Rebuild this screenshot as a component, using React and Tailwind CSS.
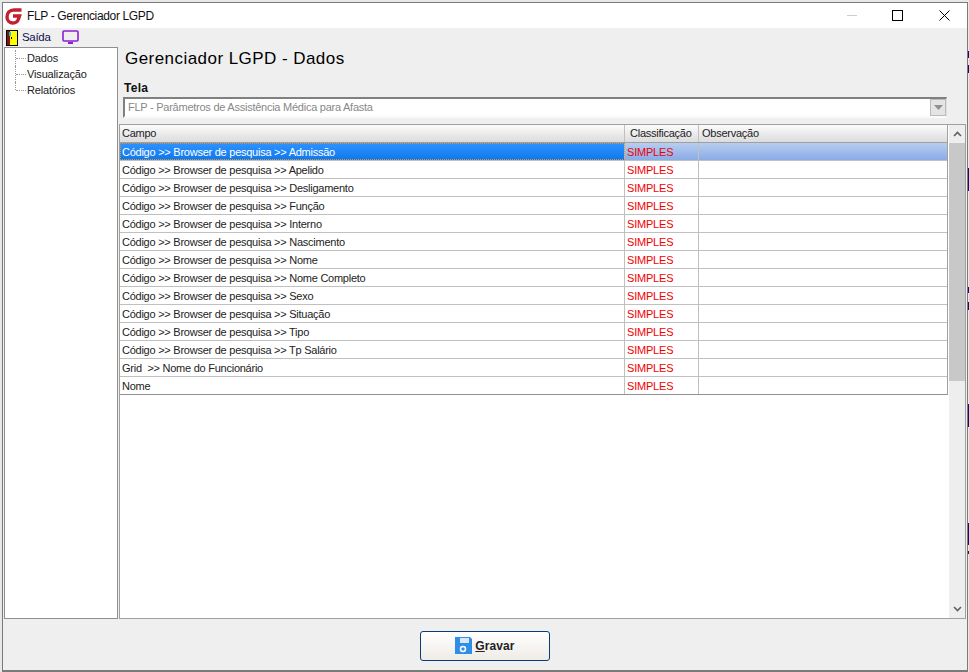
import { useState } from 'react'

const font = 'font-["Liberation_Sans",Arial,sans-serif]'

const campos = [
  'Código >> Browser de pesquisa >> Admissão',
  'Código >> Browser de pesquisa >> Apelido',
  'Código >> Browser de pesquisa >> Desligamento',
  'Código >> Browser de pesquisa >> Função',
  'Código >> Browser de pesquisa >> Interno',
  'Código >> Browser de pesquisa >> Nascimento',
  'Código >> Browser de pesquisa >> Nome',
  'Código >> Browser de pesquisa >> Nome Completo',
  'Código >> Browser de pesquisa >> Sexo',
  'Código >> Browser de pesquisa >> Situação',
  'Código >> Browser de pesquisa >> Tipo',
  'Código >> Browser de pesquisa >> Tp Salário',
  'Grid  >> Nome do Funcionário',
  'Nome',
]

// pieces of the window behind, visible past the right frame
const backdrop = [
  'h-[51px]', 'h-[7px] bg-[#10106a]', 'h-[7px]', 'h-[8px] bg-[#10106a]', 'h-[95px]',
  'h-[23px] bg-[#10106a]', 'h-[96px]', 'h-[6px] bg-[#10106a]', 'h-[9px]', 'h-[8px] bg-[#10106a]',
  'h-[94px]', 'h-[23px] bg-[#10106a]', 'h-[96px]', 'h-[22px] bg-[#10106a]', 'h-[6px]', 'h-[3px] bg-[#222]',
]

function TitleBar() {
  return (
    <div className="h-[25px] bg-white flex items-center shrink-0">
      <svg width="18" height="18" viewBox="0 0 18 18" className="ml-[2px]">
        <path d="M16.5 3 H9 C4.5 3 2 6 2 10 C2 14 5 16 8 16 C11 16 12.5 15 13.5 12 L14.5 9 H8" fill="none" stroke="#c42030" strokeWidth="3.4" />
      </svg>
      <span className="ml-[4px] text-[12px] tracking-[-0.35px] text-[#111]">FLP - Gerenciador LGPD</span>
      <div className="ml-auto flex items-center">
        <div className="w-[10px] h-px bg-[#ccc] mr-[35px]" />
        <div className="w-[9px] h-[9px] border border-black mr-[36px] box-content" />
        <svg width="11" height="11" viewBox="0 0 11 11" className="mr-[17px]">
          <path d="M0.5 0.5 L10.5 10.5 M10.5 0.5 L0.5 10.5" stroke="#000" strokeWidth="1" />
        </svg>
      </div>
    </div>
  )
}

function MenuBar() {
  return (
    <div className="h-[19px] flex items-center shrink-0 pl-[3px]">
      <svg width="12" height="16" viewBox="0 0 12 16">
        <rect width="12" height="16" fill="#000" />
        <rect x="1" y="1" width="10" height="14" fill="#ffff00" />
        <rect x="1" y="1" width="3" height="14" fill="#8b1010" />
        <rect x="3" y="2" width="2" height="4" fill="#18c8d8" />
        <rect x="5" y="7" width="1" height="2" fill="#000" />
      </svg>
      <span className="ml-[4px] w-[28px] text-[11.5px] tracking-[-0.3px] text-[#10104a]">Saída</span>
      <svg width="17" height="15" viewBox="0 0 17 15" className="ml-[12px]">
        <rect x="1" y="1" width="15" height="10" rx="1" fill="none" stroke="#8a1fd8" strokeWidth="1.6" />
        <rect x="6" y="12" width="5" height="2" fill="#8a1fd8" />
      </svg>
    </div>
  )
}

function Tree() {
  return (
    <div className="w-[114px] shrink-0 bg-white border border-[#909090] pt-[2px] text-[11px] tracking-[-0.15px] text-[#222]">
      {['Dados', 'Visualização', 'Relatórios'].map((item, i) => (
        <div key={item} className="h-[16px] flex items-center">
          <div className={`w-[10px] ml-[10px] border-l border-dotted border-[#999] relative ${i === 2 ? 'h-[8px] self-start' : 'h-full'}`}>
            <div className="absolute left-0 top-[8px] w-[10px] border-t border-dotted border-[#999]" />
          </div>
          <span className="ml-[2px]">{item}</span>
        </div>
      ))}
    </div>
  )
}

function Grid() {
  const [selected] = useState(0)
  return (
    <div className="flex-1 min-h-0 bg-white border border-[#a0a0a0] flex">
      <div className="flex-1 min-w-0 pr-px">
        <div className="h-[18px] flex border-b border-[#a0a0a0] border-r bg-linear-to-b from-[#fbfbfb] to-[#dcdcdc] text-[11px] text-[#222] tracking-[-0.25px]">
          <div className="w-[505px] pl-[2px] border-r border-[#c0c0c0] leading-[17px]">Campo</div>
          <div className="w-[74px] pl-[5px] border-r border-[#c0c0c0] leading-[17px]">Classificação</div>
          <div className="flex-1 pl-[3px] leading-[17px]">Observação</div>
        </div>
        <div className="border-r border-[#a0a0a0]">
          {campos.map((campo, i) => {
            const isSel = i === selected
            return (
              <div key={campo} className={`h-[18px] flex border-b text-[11px] leading-[19px] ${i === campos.length - 1 ? 'border-[#909090]' : 'border-[#c0c0c0]'} ${isSel ? 'bg-linear-to-b from-[#b8cef0] to-[#8aabe6]' : ''}`}>
                <div className={`w-[505px] pl-[2px] tracking-[-0.25px] whitespace-pre border-r border-[#c0c0c0] ${isSel ? 'bg-linear-to-b from-[#2e93ff] to-[#0a78f0] text-white outline-1 -outline-offset-1 outline-dotted outline-[#e09030]' : 'text-[#222]'}`}>
                  {campo}
                </div>
                <div className="w-[74px] pl-[2px] border-r border-[#c0c0c0] tracking-[-0.2px] text-[#f00000]">SIMPLES</div>
                <div className="flex-1" />
              </div>
            )
          })}
        </div>
      </div>
      <div className="w-[16px] shrink-0 bg-[#eeeeee] flex flex-col">
        <div className="h-[18px] flex items-center justify-center">
          <svg width="9" height="6" viewBox="0 0 9 6">
            <path d="M1 5 L4.5 1.5 L8 5" fill="none" stroke="#606060" strokeWidth="1.6" />
          </svg>
        </div>
        <div className="h-[238px] bg-[#c8c8c8]" />
        <div className="flex-1" />
        <div className="h-[18px] flex items-center justify-center">
          <svg width="9" height="6" viewBox="0 0 9 6">
            <path d="M1 1 L4.5 4.5 L8 1" fill="none" stroke="#606060" strokeWidth="1.6" />
          </svg>
        </div>
      </div>
    </div>
  )
}

export default function App() {
  return (
    <div className={`${font} w-[969px] h-[672px] overflow-hidden flex bg-[#e8e8e8]`}>
      <div className="w-[2px] shrink-0" />
      <div className="flex-1 min-w-0 flex flex-col border border-b-2 border-[#7a7a7a] mt-[2px] bg-[#efefef]">
        <TitleBar />
        <MenuBar />
        <div className="flex-1 min-h-0 flex pl-px pr-px gap-px">
          <Tree />
          <div className="flex-1 min-w-0 flex flex-col">
            <h1 className="h-[28px] pl-[6px] pt-[1px] text-[17px] leading-[22px] tracking-[0.45px] text-black">Gerenciador LGPD - Dados</h1>
            <div className="h-[12px] mt-[7px] pl-[5px] text-[12px] leading-[12px] font-bold text-[#111] tracking-[0.3px]">Tela</div>
            <div className="h-[21px] mt-[3px] ml-[4px] mr-[19px] flex items-center border-2 border-r border-t-[#808080] border-l-[#808080] border-r-[#e0e0e0] border-b-[#fafafa] bg-white shrink-0">
              <span className="pl-[3px] text-[11px] tracking-[-0.25px] text-[#888]">FLP - Parâmetros de Assistência Médica para Afasta</span>
              <div className="ml-auto w-[16px] h-[17px] bg-[#e4e4e4] border border-[#bbb] flex items-center justify-center">
                <svg width="9" height="5" viewBox="0 0 9 5"><path d="M0 0 H9 L4.5 5 Z" fill="#909090" /></svg>
              </div>
            </div>
            <div className="h-[6px] shrink-0" />
            <Grid />
          </div>
        </div>
        <div className="h-[51px] shrink-0 flex items-center justify-center">
          <button className="w-[130px] h-[30px] mt-[2px] rounded-[3px] border border-[#0a3d78] bg-linear-to-b from-white to-[#efebe6] flex items-center justify-center text-[12px] font-bold text-[#222] tracking-[0.1px]">
            <svg width="17" height="17" viewBox="0 0 17 17" className="mr-[3px]">
              <path d="M0 0 H15 L17 2 V17 H0 Z" fill="#2f8fe8" />
              <rect x="3" y="1" width="11" height="5" fill="#d8e8f8" />
              <rect x="3" y="1" width="2" height="5" fill="#2f8fe8" />
              <circle cx="8" cy="12" r="2.5" fill="none" stroke="#fff" strokeWidth="1.5" />
            </svg>
            <span><span className="underline">G</span>ravar</span>
          </button>
        </div>
      </div>
      <div className="w-[1px] shrink-0 flex flex-col">
        {backdrop.map((piece, i) => (
          <div key={i} className={piece} />
        ))}
      </div>
    </div>
  )
}
